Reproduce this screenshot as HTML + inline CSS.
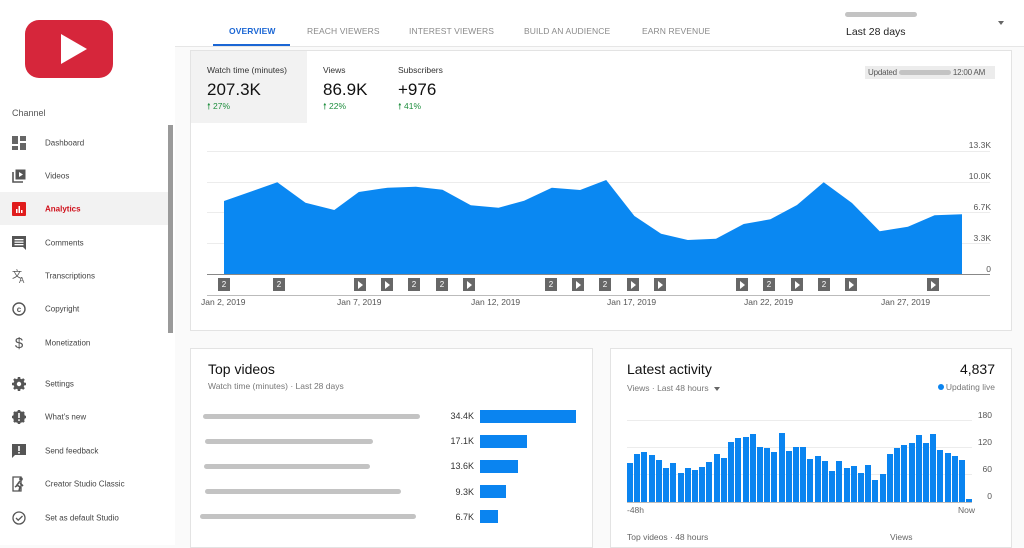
<!DOCTYPE html>
<html><head><meta charset="utf-8"><style>
*{margin:0;padding:0;box-sizing:border-box}
body{width:1024px;height:545px;overflow:hidden;background:#fafafa;font-family:"Liberation Sans",sans-serif;position:relative;color:#222}
.abs{position:absolute}
#side{position:absolute;left:0;top:0;width:175px;height:545px;background:#fff}
.nav{position:absolute;left:0;width:168px;height:33px;font-size:8px;color:#444}
.nav span{position:absolute;left:45px;top:50%;transform:translateY(-50%)}
.nav svg{position:absolute;left:12px;top:50%;transform:translateY(-50%)}
.card{position:absolute;background:#fff;border:1px solid #e3e3e3}
.tab{position:absolute;top:26px;font-size:8.5px;color:#8a8a8a;letter-spacing:.1px}
.ylab{position:absolute;right:33px;font-size:8.5px;color:#555;text-align:right}
.gl{position:absolute;left:207px;width:783px;height:1px;background:#ececec}
.mk{position:absolute;top:278px;width:12px;height:13px;background:#676767;color:#fff;font-size:8px;text-align:center;line-height:13px}
.tri{display:inline-block;width:0;height:0;border-left:5px solid #fff;border-top:4px solid transparent;border-bottom:4px solid transparent;margin-top:2.5px}
.dl{position:absolute;top:297px;font-size:8.5px;color:#555}
.blur{position:absolute;height:5px;background:#c3c3c3;border-radius:3px}
.val{position:absolute;right:550px;font-size:9px;color:#333}
.bar{position:absolute;left:480px;height:13px;background:#0a84f0}
</style></head><body>
<div id="side">
 <div class="abs" style="left:25px;top:20px;width:88px;height:58px;background:#d6263b;border-radius:14px"></div>
 <div class="abs" style="left:61px;top:34px;width:0;height:0;border-left:26px solid #fff;border-top:15px solid transparent;border-bottom:15px solid transparent"></div>
 <div class="abs" style="left:12px;top:108px;font-size:9px;color:#555">Channel</div>
 <div class="abs" style="left:168px;top:125px;width:5px;height:208px;background:#9a9a9a"></div>

 <div class="nav" style="top:126px"><svg width="14" height="14"><rect x="0" y="0" width="6" height="8" fill="#666"/><rect x="8" y="0" width="6" height="5" fill="#666"/><rect x="0" y="10" width="6" height="4" fill="#666"/><rect x="8" y="7" width="6" height="7" fill="#666"/></svg><span>Dashboard</span></div>
 <div class="nav" style="top:159px"><svg width="14" height="14"><path d="M1 3v10h10" stroke="#555" stroke-width="1.6" fill="none"/><rect x="3.5" y="0.5" width="10" height="10" fill="#555"/><path d="M7 3l4 2.5-4 2.5z" fill="#fff"/></svg><span>Videos</span></div>
 <div class="nav" style="top:192px;background:#f2f2f2;color:#d0101b;font-weight:bold"><svg width="14" height="14"><rect width="14" height="14" rx="1" fill="#e01c1c"/><rect x="4" y="7" width="1.5" height="4" fill="#fff"/><rect x="6.5" y="4" width="1.5" height="7" fill="#fff"/><rect x="9" y="8" width="1.5" height="3" fill="#fff"/></svg><span>Analytics</span></div>
 <div class="nav" style="top:226px"><svg width="14" height="14"><path d="M0 0h14v14l-3-3H0z" fill="#555"/><rect x="2.5" y="3" width="9" height="1.3" fill="#fff"/><rect x="2.5" y="5.5" width="9" height="1.3" fill="#fff"/><rect x="2.5" y="8" width="9" height="1.3" fill="#fff"/></svg><span>Comments</span></div>
 <div class="nav" style="top:259px"><svg width="16" height="14"><text x="0" y="9" font-size="10" fill="#555" font-family="Liberation Sans, Noto Sans CJK SC, sans-serif">文</text><text x="7" y="14" font-size="8" fill="#555" font-family="Liberation Sans">A</text></svg><span>Transcriptions</span></div>
 <div class="nav" style="top:292px"><svg width="14" height="14"><circle cx="7" cy="7" r="6" stroke="#555" stroke-width="1.4" fill="none"/><text x="7" y="10" font-size="8" text-anchor="middle" fill="#555" font-family="Liberation Sans" font-weight="bold">c</text></svg><span>Copyright</span></div>
 <div class="nav" style="top:326px"><svg width="14" height="16"><text x="7" y="13" font-size="15" text-anchor="middle" fill="#555" font-family="Liberation Sans">$</text></svg><span>Monetization</span></div>
 <div class="nav" style="top:367px"><svg width="14" height="14"><circle cx="7" cy="7" r="5.5" fill="#555"/><path d="M7 0v14M0 7h14M2 2l10 10M12 2L2 12" stroke="#555" stroke-width="2.5"/><circle cx="7" cy="7" r="2.2" fill="#fff"/></svg><span>Settings</span></div>
 <div class="nav" style="top:400px"><svg width="14" height="14"><circle cx="7" cy="7" r="6" fill="#555"/><path d="M7 0v14M0 7h14M2 2l10 10M12 2L2 12" stroke="#555" stroke-width="2.5"/><rect x="6.2" y="3" width="1.6" height="5" fill="#fff"/><rect x="6.2" y="9.3" width="1.6" height="1.6" fill="#fff"/></svg><span>What's new</span></div>
 <div class="nav" style="top:434px"><svg width="14" height="14"><path d="M0 0h14v11H3l-3 3z" fill="#555"/><rect x="6.2" y="2" width="1.6" height="5" fill="#fff"/><rect x="6.2" y="8" width="1.6" height="1.6" fill="#fff"/></svg><span>Send feedback</span></div>
 <div class="nav" style="top:467px"><svg width="14" height="16"><path d="M1 1h8v14H1z" stroke="#555" stroke-width="1.3" fill="none"/><circle cx="9" cy="3" r="1.8" fill="#555"/><path d="M8 5l-3 4 3 2-1 4M8 7l3 3M6 9l-3 2" stroke="#555" stroke-width="1.6" fill="none"/></svg><span>Creator Studio Classic</span></div>
 <div class="nav" style="top:501px"><svg width="14" height="14"><circle cx="7" cy="7" r="6" stroke="#555" stroke-width="1.3" fill="none"/><path d="M4 7l2.2 2.2L10.5 5" stroke="#555" stroke-width="1.3" fill="none"/></svg><span>Set as default Studio</span></div>
</div>

<!-- header -->
<div class="abs" style="left:175px;top:0;width:849px;height:47px;background:#fff;border-bottom:1px solid #e6e6e6"></div>
<div class="tab" style="left:229px;color:#1a66d4;font-weight:bold">OVERVIEW</div>
<div class="abs" style="left:213px;top:44px;width:77px;height:2px;background:#1a66d4"></div>
<div class="tab" style="left:307px">REACH VIEWERS</div>
<div class="tab" style="left:409px">INTEREST VIEWERS</div>
<div class="tab" style="left:524px">BUILD AN AUDIENCE</div>
<div class="tab" style="left:642px">EARN REVENUE</div>
<div class="blur" style="left:845px;top:12px;width:72px"></div>
<div class="abs" style="left:846px;top:26px;font-size:10.5px;color:#222">Last 28 days</div>
<div class="abs" style="left:998px;top:21px;width:0;height:0;border-left:3.5px solid transparent;border-right:3.5px solid transparent;border-top:4px solid #666"></div>

<!-- main card -->
<div class="card" style="left:190px;top:50px;width:822px;height:281px"></div>
<div class="abs" style="left:191px;top:51px;width:116px;height:72px;background:#f2f2f2"></div>
<div class="abs" style="left:207px;top:65px;font-size:8.5px;color:#333">Watch time (minutes)</div>
<div class="abs" style="left:207px;top:80px;font-size:17px;color:#111">207.3K</div>
<div class="abs" style="left:207px;top:101px;font-size:8.5px;color:#1e8e3e">🠕 27%</div>
<div class="abs" style="left:323px;top:65px;font-size:8.5px;color:#333">Views</div>
<div class="abs" style="left:323px;top:80px;font-size:17px;color:#111">86.9K</div>
<div class="abs" style="left:323px;top:101px;font-size:8.5px;color:#1e8e3e">🠕 22%</div>
<div class="abs" style="left:398px;top:65px;font-size:8.5px;color:#333">Subscribers</div>
<div class="abs" style="left:398px;top:80px;font-size:17px;color:#111">+976</div>
<div class="abs" style="left:398px;top:101px;font-size:8.5px;color:#1e8e3e">🠕 41%</div>
<div class="abs" style="left:865px;top:66px;width:130px;height:13px;background:#ececec;font-size:8px;color:#555;line-height:13px;padding-left:3px;white-space:nowrap;overflow:hidden;letter-spacing:-.2px">Updated <span style="display:inline-block;width:52px;height:5px;background:#c3c3c3;border-radius:3px;vertical-align:middle"></span> 12:00 AM</div>

<div class="gl" style="top:151px"></div><div class="gl" style="top:182px"></div><div class="gl" style="top:212px"></div><div class="gl" style="top:243px"></div>
<div class="ylab" style="top:140px">13.3K</div><div class="ylab" style="top:171px">10.0K</div><div class="ylab" style="top:202px">6.7K</div><div class="ylab" style="top:233px">3.3K</div><div class="ylab" style="top:264px">0</div>
<svg class="abs" style="left:0;top:0" width="1024" height="300">
<polygon fill="#0a88f2" points="224,274 224,201 253.3,190.7 277.3,182.3 305.5,202.7 334.3,210 358.8,192 387.6,187.7 415.9,186.7 442.5,189.7 470.8,205.3 498.5,207.7 524.1,200.7 551.8,187.7 580.1,190 606.2,180 634.4,216 661.1,233.7 687.8,240 716,238.7 743.7,224 770.4,219.3 797,205 823.7,182.3 852,203 879.7,231.3 907.9,226.7 934.6,215.3 962,214.3 962,274"/>
<line x1="207" y1="274.5" x2="990" y2="274.5" stroke="#888" stroke-width="1"/>
<line x1="207" y1="295.5" x2="990" y2="295.5" stroke="#bbb" stroke-width="1"/>
</svg>
<div class="mk" style="left:218px">2</div><div class="mk" style="left:273px">2</div><div class="mk" style="left:354px"><i class="tri"></i></div><div class="mk" style="left:381px"><i class="tri"></i></div><div class="mk" style="left:408px">2</div><div class="mk" style="left:436px">2</div><div class="mk" style="left:463px"><i class="tri"></i></div><div class="mk" style="left:545px">2</div><div class="mk" style="left:572px"><i class="tri"></i></div><div class="mk" style="left:599px">2</div><div class="mk" style="left:627px"><i class="tri"></i></div><div class="mk" style="left:654px"><i class="tri"></i></div><div class="mk" style="left:736px"><i class="tri"></i></div><div class="mk" style="left:763px">2</div><div class="mk" style="left:791px"><i class="tri"></i></div><div class="mk" style="left:818px">2</div><div class="mk" style="left:845px"><i class="tri"></i></div><div class="mk" style="left:927px"><i class="tri"></i></div>
<div class="dl" style="left:201px">Jan 2, 2019</div><div class="dl" style="left:337px">Jan 7, 2019</div><div class="dl" style="left:471px">Jan 12, 2019</div><div class="dl" style="left:607px">Jan 17, 2019</div><div class="dl" style="left:744px">Jan 22, 2019</div><div class="dl" style="left:881px">Jan 27, 2019</div>

<!-- top videos -->
<div class="card" style="left:190px;top:348px;width:403px;height:200px"></div>
<div class="abs" style="left:208px;top:361px;font-size:14px;color:#111">Top videos</div>
<div class="abs" style="left:208px;top:381px;font-size:8.5px;color:#777">Watch time (minutes) · Last 28 days</div>
<div class="blur" style="left:203px;top:414px;width:217px"></div>
<div class="blur" style="left:205px;top:439px;width:168px"></div>
<div class="blur" style="left:204px;top:464px;width:166px"></div>
<div class="blur" style="left:205px;top:489px;width:196px"></div>
<div class="blur" style="left:200px;top:514px;width:216px"></div>
<div class="val" style="top:411px">34.4K</div><div class="bar" style="top:410px;width:96px"></div>
<div class="val" style="top:436px">17.1K</div><div class="bar" style="top:435px;width:47px"></div>
<div class="val" style="top:461px">13.6K</div><div class="bar" style="top:460px;width:38px"></div>
<div class="val" style="top:487px">9.3K</div><div class="bar" style="top:485px;width:26px"></div>
<div class="val" style="top:512px">6.7K</div><div class="bar" style="top:510px;width:18px"></div>

<!-- latest activity -->
<div class="card" style="left:610px;top:348px;width:402px;height:200px"></div>
<div class="abs" style="left:627px;top:361px;font-size:14px;color:#111">Latest activity</div>
<div class="abs" style="left:627px;top:383px;font-size:8.5px;color:#777">Views · Last 48 hours <span style="display:inline-block;width:0;height:0;border-left:3.5px solid transparent;border-right:3.5px solid transparent;border-top:4px solid #666;vertical-align:middle;margin-left:3px"></span></div>
<div class="abs" style="right:29px;top:361px;font-size:14px;color:#111">4,837</div>
<div class="abs" style="right:29px;top:382px;font-size:8.5px;color:#777"><span style="display:inline-block;width:6px;height:6px;border-radius:50%;background:#0a84f0;margin-right:2px"></span>Updating live</div>
<div class="abs" style="left:627px;top:420px;width:345px;height:1px;background:#ececec"></div>
<div class="abs" style="left:627px;top:447px;width:345px;height:1px;background:#ececec"></div>
<div class="abs" style="left:627px;top:474px;width:345px;height:1px;background:#ececec"></div>
<div class="abs" style="left:627px;top:502px;width:345px;height:1px;background:#bbb"></div>
<div class="abs" style="right:32px;top:410px;font-size:8.5px;color:#555">180</div>
<div class="abs" style="right:32px;top:437px;font-size:8.5px;color:#555">120</div>
<div class="abs" style="right:32px;top:464px;font-size:8.5px;color:#555">60</div>
<div class="abs" style="right:32px;top:491px;font-size:8.5px;color:#555">0</div>
<div class="abs" style="left:627px;top:422px;height:80px;width:348px;display:flex;align-items:flex-end;gap:1.23px">
<i style="width:6px;height:39px;background:#0a84f0"></i><i style="width:6px;height:47.7px;background:#0a84f0"></i><i style="width:6px;height:49.7px;background:#0a84f0"></i><i style="width:6px;height:46.7px;background:#0a84f0"></i><i style="width:6px;height:42px;background:#0a84f0"></i><i style="width:6px;height:34.3px;background:#0a84f0"></i><i style="width:6px;height:38.7px;background:#0a84f0"></i><i style="width:6px;height:28.7px;background:#0a84f0"></i><i style="width:6px;height:33.7px;background:#0a84f0"></i><i style="width:6px;height:32.3px;background:#0a84f0"></i><i style="width:6px;height:35px;background:#0a84f0"></i><i style="width:6px;height:40px;background:#0a84f0"></i><i style="width:6px;height:48px;background:#0a84f0"></i><i style="width:6px;height:44px;background:#0a84f0"></i><i style="width:6px;height:60.3px;background:#0a84f0"></i><i style="width:6px;height:64.3px;background:#0a84f0"></i><i style="width:6px;height:65px;background:#0a84f0"></i><i style="width:6px;height:67.7px;background:#0a84f0"></i><i style="width:6px;height:55px;background:#0a84f0"></i><i style="width:6px;height:54px;background:#0a84f0"></i><i style="width:6px;height:49.7px;background:#0a84f0"></i><i style="width:6px;height:68.7px;background:#0a84f0"></i><i style="width:6px;height:51.3px;background:#0a84f0"></i><i style="width:6px;height:55px;background:#0a84f0"></i><i style="width:6px;height:55px;background:#0a84f0"></i><i style="width:6px;height:43px;background:#0a84f0"></i><i style="width:6px;height:46px;background:#0a84f0"></i><i style="width:6px;height:40.7px;background:#0a84f0"></i><i style="width:6px;height:30.7px;background:#0a84f0"></i><i style="width:6px;height:40.7px;background:#0a84f0"></i><i style="width:6px;height:33.7px;background:#0a84f0"></i><i style="width:6px;height:35.7px;background:#0a84f0"></i><i style="width:6px;height:29.3px;background:#0a84f0"></i><i style="width:6px;height:37.3px;background:#0a84f0"></i><i style="width:6px;height:22px;background:#0a84f0"></i><i style="width:6px;height:28px;background:#0a84f0"></i><i style="width:6px;height:47.7px;background:#0a84f0"></i><i style="width:6px;height:54px;background:#0a84f0"></i><i style="width:6px;height:57.3px;background:#0a84f0"></i><i style="width:6px;height:58.7px;background:#0a84f0"></i><i style="width:6px;height:67px;background:#0a84f0"></i><i style="width:6px;height:59.3px;background:#0a84f0"></i><i style="width:6px;height:68.3px;background:#0a84f0"></i><i style="width:6px;height:52px;background:#0a84f0"></i><i style="width:6px;height:49px;background:#0a84f0"></i><i style="width:6px;height:46px;background:#0a84f0"></i><i style="width:6px;height:42px;background:#0a84f0"></i><i style="width:6px;height:2.7px;background:#0a84f0"></i>
</div>
<div class="abs" style="left:627px;top:505px;font-size:8.5px;color:#666">-48h</div>
<div class="abs" style="left:958px;top:505px;font-size:8.5px;color:#666">Now</div>
<div class="abs" style="left:627px;top:532px;font-size:8.5px;color:#666">Top videos · 48 hours</div>
<div class="abs" style="left:890px;top:532px;font-size:8.5px;color:#666">Views</div>
</body></html>
